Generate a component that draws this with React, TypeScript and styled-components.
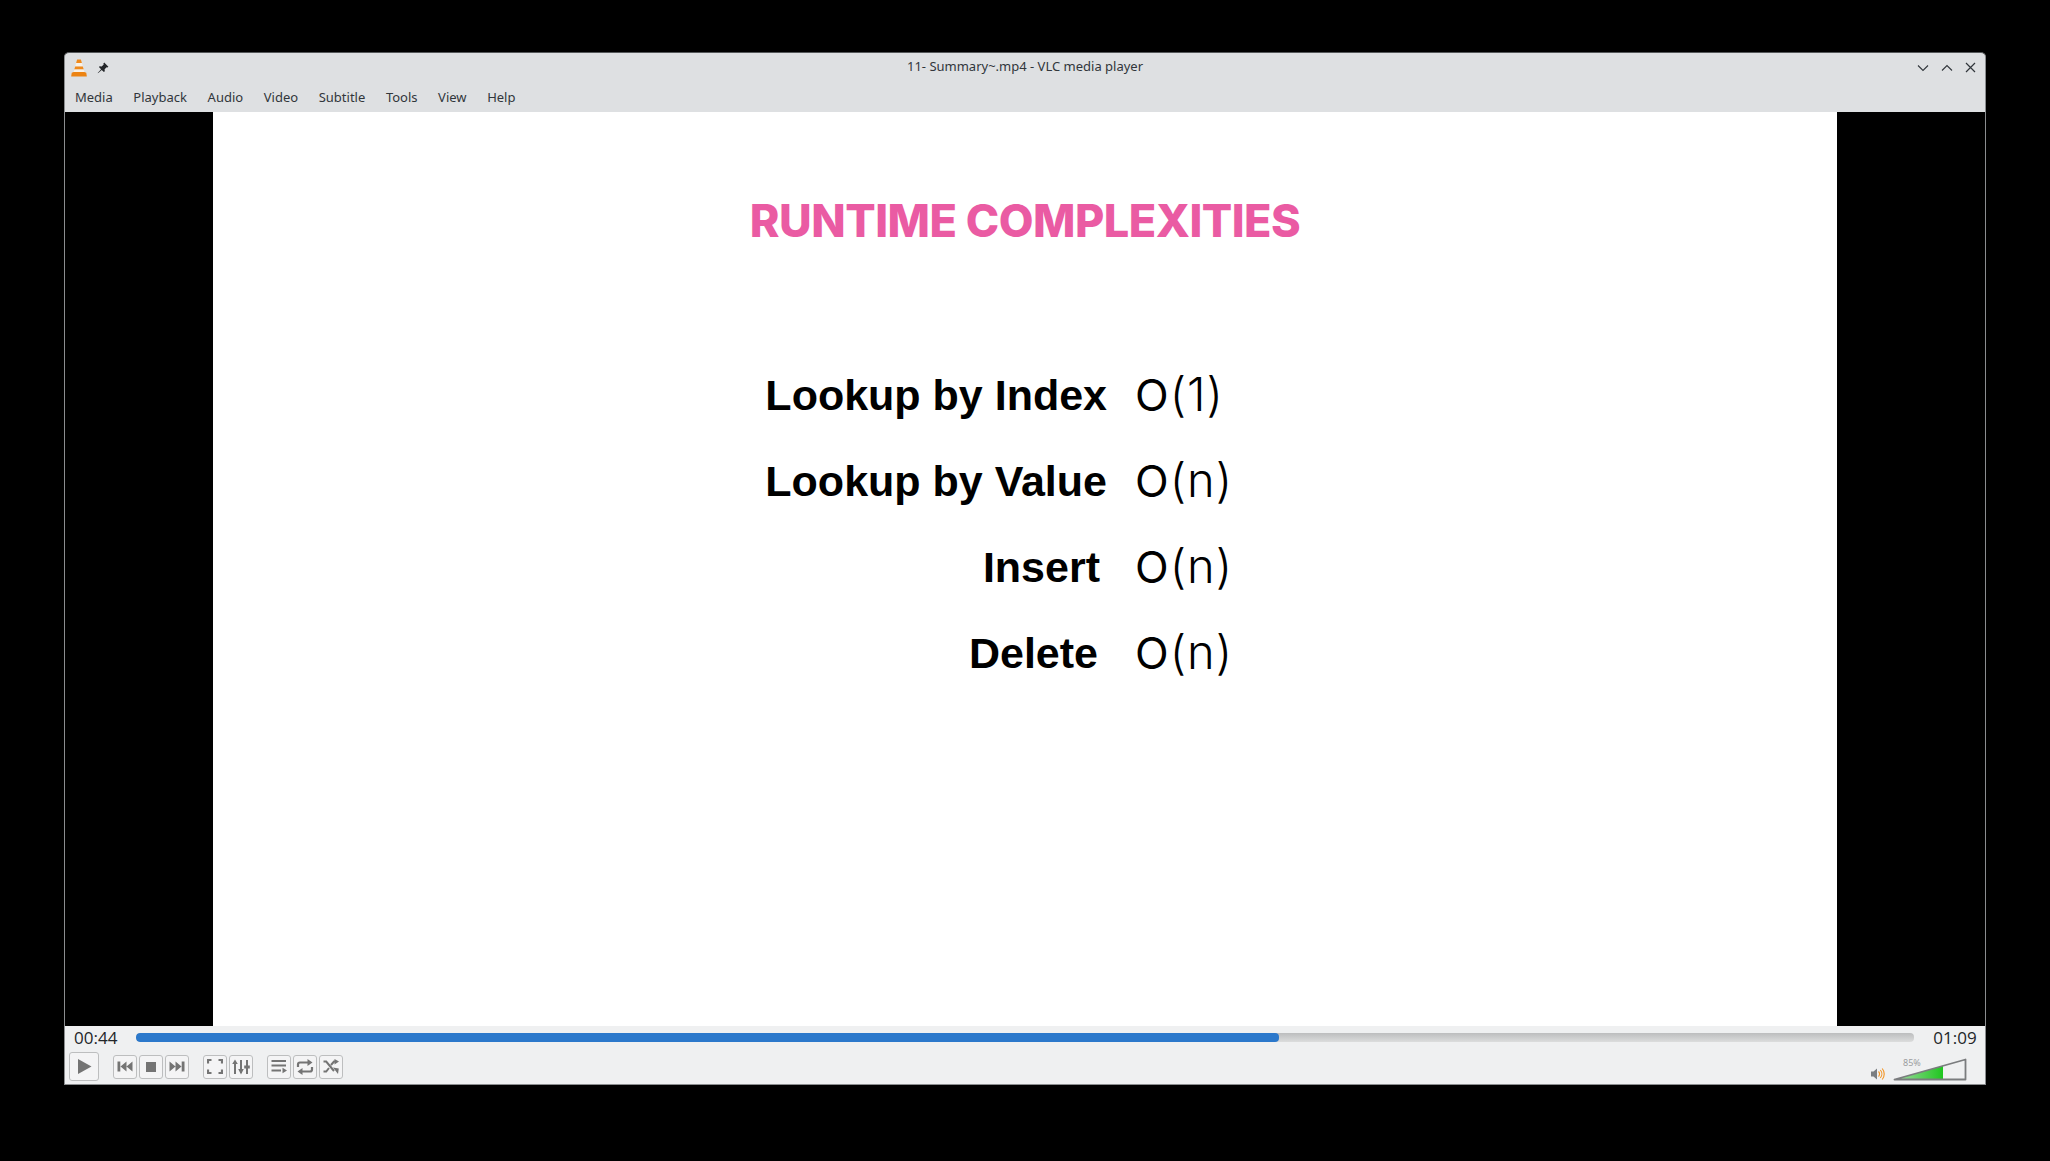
import React from "react"
import styled, { createGlobalStyle } from "styled-components"

const GlobalStyle = createGlobalStyle`
  html, body {
    margin: 0;
    height: 100%;
    background: #000;
  }
  body {
    font-family: "Noto Sans", sans-serif;
  }
`

const MENU_ITEMS = ["Media", "Playback", "Audio", "Video", "Subtitle", "Tools", "View", "Help"]

const ROWS = [
  { label: "Lookup by Index", value: "(1)", inset: 0 },
  { label: "Lookup by Value", value: "(n)", inset: 0 },
  { label: "Insert", value: "(n)", inset: 7 },
  { label: "Delete", value: "(n)", inset: 9 },
]

const ConeIcon = () => (
  <svg width="16" height="18" viewBox="0 0 16 18">
    <path d="M6.100 .5h3.800l1 3.500H5.100z" fill="#f08a1d" />
    <path d="M5.100 4h5.800l.9 3.500H4.200z" fill="#f9f1e6" />
    <path d="M4.200 7.500h7.600l.9 3H3.300z" fill="#f08a1d" />
    <path d="M3.300 10.500h9.400l.6 2.500H2.700z" fill="#f9f1e6" />
    <path d="M2.700 13h10.600l2 .8.5 3.700H.2l.5-3.700z" fill="#ec8312" />
  </svg>
)

const PinIcon = () => (
  <svg width="12" height="12" viewBox="0 0 12 12">
    <path d="M7.200.6l4.200 4.200-1 .8-.8-.3-2 2 .2 2-.9.8-2.200-2.200L1 11.300l-.3-.3 3.400-3.700-2.200-2.200.8-.9 2 .2 2-2-.3-.8z" fill="#232629" />
  </svg>
)

const ChevronDownIcon = () => (
  <svg width="12" height="8" viewBox="0 0 12 8">
    <path d="M1 1.500l5 5 5-5" fill="none" stroke="#31363b" strokeWidth="1.100" />
  </svg>
)

const ChevronUpIcon = () => (
  <svg width="12" height="8" viewBox="0 0 12 8">
    <path d="M1 6.500l5-5 5 5" fill="none" stroke="#31363b" strokeWidth="1.100" />
  </svg>
)

const CloseIcon = () => (
  <svg width="11" height="11" viewBox="0 0 11 11">
    <path d="M1 1l9 9M10 1l-9 9" fill="none" stroke="#31363b" strokeWidth="1.200" />
  </svg>
)

const iconColor = "#747474"

const PlayIcon = () => (
  <svg width="15" height="17" viewBox="0 0 15 17">
    <path d="M1 1l13.500 7.500L1 16z" fill={iconColor} />
  </svg>
)

const PrevIcon = () => (
  <svg width="16" height="11" viewBox="0 0 16 11">
    <path d="M.5.5h2.800v10H.5zM9.500.5v10L3.500 5.500zM15.500.5v10L9.500 5.500z" fill={iconColor} />
  </svg>
)

const StopIcon = () => (
  <svg width="12" height="12" viewBox="0 0 12 12">
    <path d="M1 1h10v10H1z" fill={iconColor} />
  </svg>
)

const NextIcon = () => (
  <svg width="16" height="11" viewBox="0 0 16 11">
    <path d="M15.500.5h-2.800v10h2.800zM6.500.5v10l6-5zM.5.5v10l6-5z" fill={iconColor} />
  </svg>
)

const FullscreenIcon = () => (
  <svg width="16" height="15" viewBox="0 0 16 15">
    <path d="M1 4.500V1h3.500M11.500 1H15v3.500M15 10.500V14h-3.500M4.500 14H1v-3.500" fill="none" stroke={iconColor} strokeWidth="2.200" />
  </svg>
)

const ExtendedIcon = () => (
  <svg width="18" height="16" viewBox="0 0 18 16">
    <path d="M3 2v13M9 1v13M15 1v14" fill="none" stroke={iconColor} strokeWidth="2" />
    <path d="M.2 5h5.600L3 .5zM6.200 10h5.600L9 15.500zM12.200 6.500h5.600v3h-5.600z" fill={iconColor} />
  </svg>
)

const PlaylistIcon = () => (
  <svg width="16" height="15" viewBox="0 0 16 15">
    <path d="M.5 2h14.500M.5 6.500h14.500M.5 11.500h9.500" fill="none" stroke={iconColor} strokeWidth="2" />
    <path d="M11.500 8.700l4.500 2.800-4.500 2.800z" fill={iconColor} />
  </svg>
)

const LoopIcon = () => (
  <svg width="18" height="16" viewBox="0 0 18 16">
    <path d="M2 8V5.500Q2 3.500 4 3.500H12M16 8v2.500q0 2-2 2H6" fill="none" stroke={iconColor} strokeWidth="2.200" />
    <path d="M11.500 0l5 3.500-5 3.500zM6.500 9l-5 3.500 5 3.500z" fill={iconColor} />
  </svg>
)

const RandomIcon = () => (
  <svg width="16" height="15" viewBox="0 0 16 15">
    <path d="M.5 2.500h2.700L11 12M.5 12.500h2.700L6 9M8 6l3-3.500h1" fill="none" stroke={iconColor} strokeWidth="2" />
    <path d="M11.500 0l4.500 2.500-4.500 3zM10 8.500l5.800 1-.8 5.500z" fill={iconColor} />
  </svg>
)

const SpeakerIcon = () => (
  <svg width="15" height="14" viewBox="0 0 15 14">
    <path d="M0 4.500h2.500L6 1.500v11l-3.500-3H0z" fill="#7b7e82" />
    <path d="M7.500 4.500a3.500 3.500 0 0 1 0 5M9.300 3a6 6 0 0 1 0 8M11.200 1.500a8.500 8.500 0 0 1 0 11" fill="none" stroke="#f39321" strokeWidth="1.100" />
  </svg>
)

const VolumeWedge = () => (
  <svg width="74" height="23" viewBox="0 0 74 23">
    <defs>
      <linearGradient id="volumeFill" x1="0" x2="1" y1="0" y2="0">
        <stop offset="0" stopColor="#a7dba9" />
        <stop offset="1" stopColor="#1fc61f" />
      </linearGradient>
    </defs>
    <path d="M1.500 21.500L72.500 1.500V21.500z" fill="#eff0f1" />
    <path d="M1.500 21.500L50 7.800V21.500z" fill="url(#volumeFill)" />
    <path d="M1.500 21.500L72.500 1.500V21.500z" fill="none" stroke="#7a7c7e" strokeWidth="1.800" strokeLinejoin="round" />
  </svg>
)

const App = () => (
  <>
    <GlobalStyle />
    <Page>
      <Window>
        <TitleBar>
          <TitleLeft>
            <ConeIcon />
            <PinIcon />
          </TitleLeft>
          <Title>11- Summary~.mp4 - VLC media player</Title>
          <TitleRight>
            <ChevronDownIcon />
            <ChevronUpIcon />
            <CloseIcon />
          </TitleRight>
        </TitleBar>
        <MenuBar>
          {MENU_ITEMS.map((item) => (
            <MenuItem key={item}>{item}</MenuItem>
          ))}
        </MenuBar>
        <Video>
          <Slide>
            <Heading>RUNTIME COMPLEXITIES</Heading>
            <Rows>
              {ROWS.map((row) => (
                <React.Fragment key={row.label}>
                  <Label $inset={row.inset}>{row.label}</Label>
                  <Complexity>
                    <BigO>O</BigO>
                    {row.value}
                  </Complexity>
                </React.Fragment>
              ))}
            </Rows>
          </Slide>
        </Video>
        <Controls>
          <SeekRow>
            <Time>00:44</Time>
            <Track>
              <Progress style={{ width: `${(1143 / 1778) * 100}%` }} />
            </Track>
            <Time>01:09</Time>
          </SeekRow>
          <ButtonRow>
            <BigButton><PlayIcon /></BigButton>
            <ButtonGroup>
              <ToolButton><PrevIcon /></ToolButton>
              <ToolButton><StopIcon /></ToolButton>
              <ToolButton><NextIcon /></ToolButton>
            </ButtonGroup>
            <ButtonGroup>
              <ToolButton><FullscreenIcon /></ToolButton>
              <ToolButton><ExtendedIcon /></ToolButton>
            </ButtonGroup>
            <ButtonGroup>
              <ToolButton><PlaylistIcon /></ToolButton>
              <ToolButton><LoopIcon /></ToolButton>
              <ToolButton><RandomIcon /></ToolButton>
            </ButtonGroup>
            <Volume>
              <SpeakerIcon />
              <WedgeWrap>
                <VolumeText>85%</VolumeText>
                <VolumeWedge />
              </WedgeWrap>
            </Volume>
          </ButtonRow>
        </Controls>
      </Window>
    </Page>
  </>
)

const Page = styled.div`
  width: 2050px;
  height: 1161px;
  padding: 52px 0 0 64px;
  box-sizing: border-box;
  background: #000;
  overflow: hidden;
`

const Window = styled.div`
  width: 1922px;
  box-sizing: border-box;
  border: 1px solid #8b8d8f;
  border-top-color: #55585a;
  border-radius: 5px 5px 0 0;
  overflow: hidden;
  background: #dee0e2;
`

const TitleBar = styled.div`
  position: relative;
  height: 29px;
  display: flex;
  align-items: center;
  justify-content: space-between;
  padding: 0 9px 0 6px;
`

const TitleLeft = styled.div`
  display: flex;
  align-items: center;
  gap: 10px;
`

const Title = styled.div`
  position: absolute;
  left: 0;
  right: 0;
  top: 4px;
  text-align: center;
  font-size: 13px;
  color: #31363b;
`

const TitleRight = styled.div`
  display: flex;
  align-items: center;
  gap: 12px;
`

const MenuBar = styled.div`
  height: 30px;
  display: flex;
  align-items: center;
  padding: 0 0 0 10px;
  gap: 20.6px;
  box-sizing: border-box;
`

const MenuItem = styled.span`
  font-size: 13px;
  color: #31363b;
`

const Video = styled.div`
  height: 914px;
  padding: 0 148px;
  background: #000;
`

const Slide = styled.div`
  height: 100%;
  background: #fff;
  display: flex;
  flex-direction: column;
`

const Heading = styled.h1`
  margin: 82px 0 0;
  text-align: center;
  font-family: Inter, sans-serif;
  font-size: 45px;
  line-height: 54px;
  font-weight: 800;
  letter-spacing: -0.5px;
  color: #ea5ba3;
`

const Rows = styled.div`
  margin: 104px 0 0 543px;
  display: grid;
  grid-template-columns: 351px max-content;
  column-gap: 29px;
  grid-auto-rows: 86px;
  align-items: center;
`

const Label = styled.div<{ $inset: number }>`
  padding-right: ${(p) => p.$inset}px;
  text-align: right;
  white-space: nowrap;
  font-family: "Liberation Sans", Arial, sans-serif;
  font-size: 43px;
  font-weight: 700;
  color: #000;
`

const Complexity = styled.div`
  margin-top: -4px;
  margin-left: -1px;
  font-family: Inter, sans-serif;
  font-size: 47px;
  font-weight: 300;
  letter-spacing: 1px;
  color: #000;
`

const BigO = styled.span`
  font-size: 44px;
  font-weight: 400;
  letter-spacing: 0;
  margin-right: 1px;
`

const Controls = styled.div`
  height: 58px;
  box-sizing: border-box;
  background: #eff0f1;
  padding: 0 8px 3px 4px;
`

const SeekRow = styled.div`
  height: 22px;
  display: flex;
  align-items: center;
  padding-left: 5px;
`

const Time = styled.span`
  font-family: "Open Sans", "Noto Sans", sans-serif;
  font-size: 17px;
  color: #232629;
`

const Track = styled.div`
  width: 1778px;
  height: 9px;
  margin: 1px 19px 0 19px;
  flex: none;
  border-radius: 4px;
  background: linear-gradient(#bcbdbe, #dcdddd);
  overflow: hidden;
`

const Progress = styled.div`
  height: 100%;
  border-radius: 4px;
  background: #2b78cb;
`

const ButtonRow = styled.div`
  display: flex;
  align-items: center;
  margin-top: 4px;
`

const ButtonBase = styled.div`
  display: flex;
  align-items: center;
  justify-content: center;
  box-sizing: border-box;
  background: #f4f4f5;
  border: 1px solid #bdbebf;
  border-radius: 3px;
`

const BigButton = styled(ButtonBase)`
  width: 30px;
  height: 29px;
`

const ToolButton = styled(ButtonBase)`
  width: 24px;
  height: 24px;
`

const ButtonGroup = styled.div`
  display: flex;
  gap: 2px;
  margin-left: 14px;
`

const Volume = styled.div`
  margin-left: auto;
  margin-right: 10px;
  align-self: flex-end;
  display: flex;
  align-items: flex-end;
  gap: 7px;
`

const WedgeWrap = styled.div`
  position: relative;
  height: 23px;
  line-height: 0;
`

const VolumeText = styled.span`
  position: absolute;
  left: 10px;
  top: -1px;
  font-size: 9px;
  line-height: 11px;
  color: #9b9da0;
`

export default App
